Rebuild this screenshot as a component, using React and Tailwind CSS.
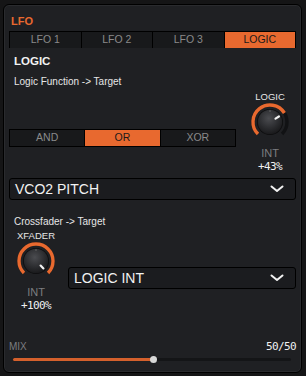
import React from "react";

const ORANGE = "#e8692f";

function Knob({ value }) {
  // value 0..1 across a 270deg sweep, starting bottom-left
  const r = 17;
  const c = 20;
  const pt = (deg, rad) => {
    const a = (deg * Math.PI) / 180;
    return [c + rad * Math.sin(a), c - rad * Math.cos(a)];
  };
  const end = -135 + 270 * value;
  const [sx, sy] = pt(-135, r);
  const [ex, ey] = pt(end, r);
  const [tx, ty] = pt(135, r);
  const sweep = end + 135;
  const [i1x, i1y] = pt(end, 6.5);
  const [i2x, i2y] = pt(end, 10.5);
  return (
    <svg width="40" height="40" viewBox="0 0 40 40">
      <defs>
        <radialGradient id="kb" cx="45%" cy="35%" r="70%">
          <stop offset="0%" stopColor="#4b4c50" />
          <stop offset="60%" stopColor="#2a2b2e" />
          <stop offset="100%" stopColor="#161618" />
        </radialGradient>
      </defs>
      <path
        d={`M ${sx} ${sy} A ${r} ${r} 0 1 1 ${tx} ${ty}`}
        fill="none"
        stroke="#111214"
        strokeWidth="3.4"
      />
      <path
        d={`M ${sx} ${sy} A ${r} ${r} 0 ${sweep > 180 ? 1 : 0} 1 ${ex} ${ey}`}
        fill="none"
        stroke={ORANGE}
        strokeWidth="3.4"
      />
      <circle cx={c} cy={c} r="13" fill="#0d0d0e" />
      <circle cx={c} cy={c} r="12.2" fill="url(#kb)" />
      <circle cx={c} cy={c - 11} r="0.8" fill="#6a6a6a" />
      <line
        x1={i1x}
        y1={i1y}
        x2={i2x}
        y2={i2y}
        stroke="#f2f2f2"
        strokeWidth="2.2"
        strokeLinecap="round"
      />
    </svg>
  );
}

function Chevron() {
  return (
    <svg width="14" height="8" viewBox="0 0 14 8">
      <path
        d="M1.5 1.5 L7 6 L12.5 1.5"
        fill="none"
        stroke="#f2f2f2"
        strokeWidth="2"
        strokeLinecap="round"
        strokeLinejoin="round"
      />
    </svg>
  );
}

function Dropdown({ label, className }) {
  return (
    <div
      className={`h-[22px] rounded-[3px] border border-black bg-[#1b1c1f] flex items-center justify-between pl-[5px] pr-[11px] ${className}`}
    >
      <span className="text-[14px] leading-none text-[#f2f2f2]">{label}</span>
      <Chevron />
    </div>
  );
}

function Tabs() {
  const tabs = ["LFO 1", "LFO 2", "LFO 3", "LOGIC"];
  return (
    <div className="mt-[3px] grid grid-cols-4 h-[17px] border border-black bg-black gap-px">
      {tabs.map((t) => (
        <div
          key={t}
          className={
            t === "LOGIC"
              ? "flex items-center justify-center bg-[#e8692f] text-[#1a1a1a] text-[10.5px]"
              : "flex items-center justify-center bg-[#18191b] text-[#8a8a8a] text-[10.5px]"
          }
        >
          {t}
        </div>
      ))}
    </div>
  );
}

function Modes() {
  const modes = ["AND", "OR", "XOR"];
  return (
    <div className="mt-[41px] w-[227px] grid grid-cols-3 h-[18px] border border-black bg-black gap-px">
      {modes.map((m) => (
        <div
          key={m}
          className={
            m === "OR"
              ? "flex items-center justify-center bg-[#e8692f] text-[#1a1a1a] text-[10.5px]"
              : "flex items-center justify-center bg-[#18191b] text-[#8a8a8a] text-[10.5px]"
          }
        >
          {m}
        </div>
      ))}
    </div>
  );
}

function KnobColumn({ title, value, amount, className }) {
  return (
    <div className={`flex flex-col items-center ${className}`}>
      <div className="h-[11px] leading-[11px] text-[9.5px] text-[#e6e6e6]">{title}</div>
      <Knob value={value} />
      <div className="mt-[5px] h-[12px] leading-[12px] text-[11px] text-[#7c7d80]">INT</div>
      <div className="mt-[2px] h-[12px] leading-[12px] text-[11px] text-[#f0f0f0] font-[DejaVu_Sans_Mono,monospace] tracking-[-0.6px]">
        {amount}
      </div>
    </div>
  );
}

export default function App() {
  return (
    <div className="w-[306px] h-[376px] bg-[#151516] pt-[4px] pl-[3px] font-[Liberation_Sans,Arial,sans-serif]">
      <div className="w-[299px] h-[369px] rounded-[6px] border border-black bg-[#1f2023] px-[5px] shadow-[inset_0_0_0_1px_#2a2b2e]">
        <div className="mt-[9px] h-[14px] leading-[14px] pl-[2px] text-[11px] font-bold text-[#e8692f]">
          LFO
        </div>
        <Tabs />
        <div className="mt-[5px] h-[16px] leading-[16px] pl-[5px] text-[11.5px] font-bold text-[#f2f2f2]">
          LOGIC
        </div>
        <div className="mt-[7px] h-[12px] leading-[12px] pl-[5px] text-[10px] text-[#e6e6e6]">
          Logic Function -&gt; Target
        </div>
        <div className="flex items-start">
          <Modes />
          <KnobColumn
            title="LOGIC"
            value={0.715}
            amount="+43%"
            className="ml-auto mt-[3px] w-[52px]"
          />
        </div>
        <Dropdown label="VCO2 PITCH" className="mt-[5px]" />
        <div className="mt-[16px] h-[12px] leading-[12px] pl-[5px] text-[10px] text-[#e6e6e6]">
          Crossfader -&gt; Target
        </div>
        <div className="flex items-start">
          <KnobColumn
            title="XFADER"
            value={1}
            amount="+100%"
            className="mt-[2px] w-[54px]"
          />
          <Dropdown label="LOGIC INT" className="mt-[39px] ml-[5px] flex-1" />
        </div>
        <div className="mt-[29px] h-[12px] leading-[12px] flex justify-between">
          <span className="text-[10px] text-[#7c7d80]">MIX</span>
          <span className="text-[11px] text-[#f0f0f0] font-[DejaVu_Sans_Mono,monospace] tracking-[-0.6px]">
            50/50
          </span>
        </div>
        <div className="mt-[5px] ml-[4px] mr-[5px] h-[3px] rounded-full bg-[#141517] flex items-center">
          <div className="h-[3px] w-[140px] rounded-full bg-[#d4602c]" />
          <div className="w-[7px] h-[7px] -ml-[3px] rounded-full bg-[#d8d8d8]" />
        </div>
      </div>
    </div>
  );
}
